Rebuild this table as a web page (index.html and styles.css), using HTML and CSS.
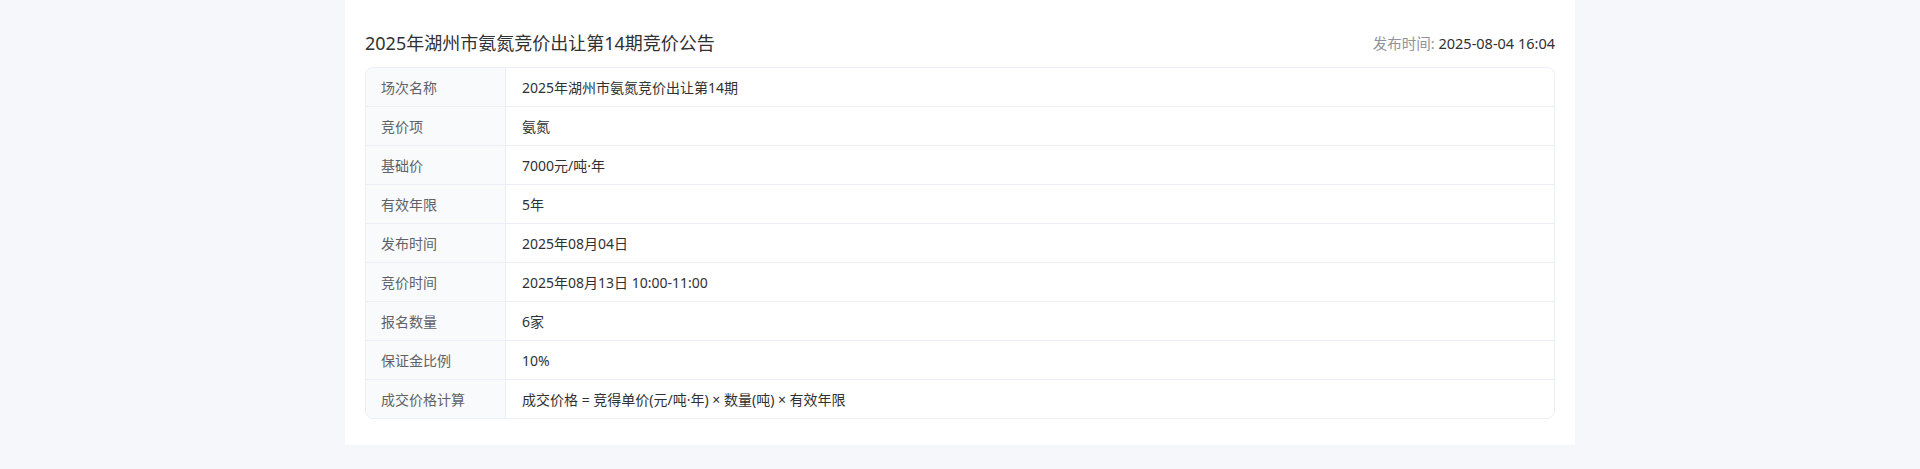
FILE: index.html
```html
<!DOCTYPE html>
<html lang="zh-CN">
<head>
<meta charset="utf-8">
<title>竞价公告</title>
<link rel="stylesheet" href="styles.css">
</head>
<body>
<div class="card">
  <div class="head">
    <h1 class="title">2025年湖州市氨氮竞价出让第14期竞价公告</h1>
    <div class="pubtime"><span class="pub-label">发布时间:</span> <span class="pub-value">2025-08-04 16:04</span></div>
  </div>
  <div class="table">
    <div class="row"><div class="label">场次名称</div><div class="value">2025年湖州市氨氮竞价出让第14期</div></div>
    <div class="row"><div class="label">竞价项</div><div class="value">氨氮</div></div>
    <div class="row"><div class="label">基础价</div><div class="value">7000元/吨·年</div></div>
    <div class="row"><div class="label">有效年限</div><div class="value">5年</div></div>
    <div class="row"><div class="label">发布时间</div><div class="value">2025年08月04日</div></div>
    <div class="row"><div class="label">竞价时间</div><div class="value">2025年08月13日 10:00-11:00</div></div>
    <div class="row"><div class="label">报名数量</div><div class="value">6家</div></div>
    <div class="row"><div class="label">保证金比例</div><div class="value">10%</div></div>
    <div class="row"><div class="label">成交价格计算</div><div class="value">成交价格 = 竞得单价(元/吨·年) × 数量(吨) × 有效年限</div></div>
  </div>
</div>
</body>
</html>
```
FILE: styles.css
```css
html, body {
  margin: 0;
  padding: 0;
  background: #f5f7fb;
  font-family: "Noto Sans", "Noto Sans CJK SC", sans-serif;
  color: #303133;
}
.card {
  width: 1230px;
  margin: 0 auto;
  background: #ffffff;
  box-sizing: border-box;
  padding: 28px 20px 26px;
}
.head {
  display: flex;
  justify-content: space-between;
  align-items: center;
  height: 30px;
  margin-bottom: 9px;
}
.title {
  margin: 0;
  font-size: 18px;
  font-weight: 400;
  color: #303133;
  line-height: 30px;
}
.pubtime {
  font-size: 14.5px;
  line-height: 30px;
}
.pub-label { color: #909399; }
.pub-value { color: #303133; }
.table {
  border: 1px solid #ebeef5;
  border-radius: 8px;
  overflow: hidden;
}
.row {
  display: flex;
  height: 38px;
  border-bottom: 1px solid #ebeef5;
  font-size: 14px;
}
.row:last-child { border-bottom: none; }
.label {
  width: 140px;
  flex: none;
  box-sizing: border-box;
  padding-left: 15px;
  background: #f9fafc;
  border-right: 1px solid #ebeef5;
  color: #606266;
  display: flex;
  align-items: center;
}
.value {
  flex: 1;
  padding-left: 16px;
  color: #303133;
  display: flex;
  align-items: center;
}
```
